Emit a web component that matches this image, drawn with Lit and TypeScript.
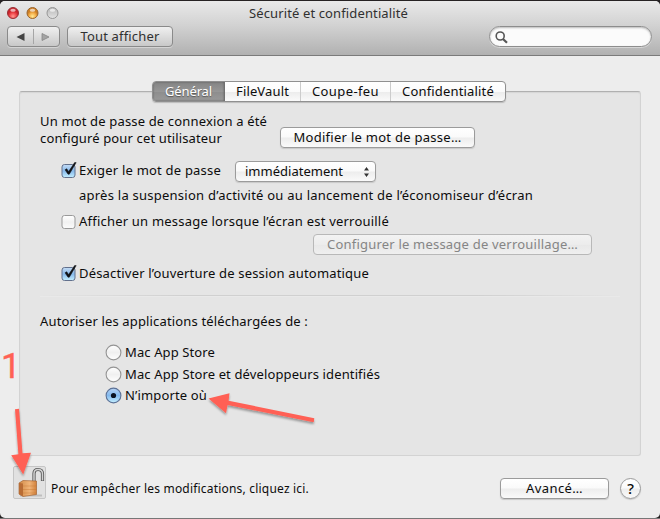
import { LitElement, html, css, svg } from "lit";
import { customElement, property } from "lit/decorators.js";

/* A single line of text, tracked so that it fills the given width. */
@customElement("tracked-text")
class TrackedText extends LitElement {
  @property() text = "";
  @property({ type: Number }) width = 0;
  static styles = css`
    :host { display: block; flex: none; white-space: pre; }
    .run { display: inline-block; font-variant-ligatures: none; }
  `;
  render() {
    return html`<span class="run">${this.text}</span>`;
  }
  updated() {
    const run = this.renderRoot.querySelector(".run") as HTMLElement;
    run.style.letterSpacing = "0px";
    const natural = run.getBoundingClientRect().width;
    const gap = (this.width - natural) / this.text.length;
    run.style.letterSpacing = gap.toFixed(3) + "px";
  }
}

const t = (text: string, width: number) =>
  html`<tracked-text .text=${text} .width=${width}></tracked-text>`;

const check = (on: boolean) => html`
  <svg class="check" width="18" height="20" viewBox="0 0 18 20">
    <defs>
      <linearGradient id="on" x1="0" y1="0" x2="0" y2="1">
        <stop offset="0" stop-color="#c5dcf4" /><stop offset=".5" stop-color="#87b9eb" /><stop offset="1" stop-color="#c4efff" />
      </linearGradient>
      <linearGradient id="off" x1="0" y1="0" x2="0" y2="1">
        <stop offset="0" stop-color="#fff" /><stop offset=".5" stop-color="#f1f1f1" /><stop offset="1" stop-color="#fbfbfb" />
      </linearGradient>
    </defs>
    <rect x="1" y="4.5" width="13" height="13" rx="2.5" fill="url(#${on ? "on" : "off"})" stroke=${on ? "#62708c" : "#999"} />
    ${on ? svg`<path d="M4 9.8 L5.7 8.7 L7.6 11.6 L13.6 2.6 L15.2 2.6 L8.3 14.2 L7 14.2 Z" fill="#101216" stroke="#101216" stroke-width=".5" />` : ""}
  </svg>`;

const radio = (on: boolean) => html`
  <svg class="radio" width="17" height="17" viewBox="0 0 17 17">
    <defs>
      <linearGradient id="ron" x1="0" y1="0" x2="0" y2="1">
        <stop offset="0" stop-color="#b8d3f3" /><stop offset=".5" stop-color="#83b9ee" /><stop offset="1" stop-color="#c6f1ff" />
      </linearGradient>
      <linearGradient id="roff" x1="0" y1="0" x2="0" y2="1">
        <stop offset="0" stop-color="#fff" /><stop offset=".5" stop-color="#f0f0f0" /><stop offset="1" stop-color="#fff" />
      </linearGradient>
    </defs>
    <circle cx="8.5" cy="8.5" r="7.4" fill="url(#${on ? "ron" : "roff"})" stroke=${on ? "#5c7196" : "#949494"} stroke-width="1.1" />
    ${on ? svg`<circle cx="8.5" cy="8.5" r="2.6" fill="#0b1220" />` : ""}
  </svg>`;

@customElement("app-root")
class AppRoot extends LitElement {
  static styles = css`
    :host { display: block; width: 660px; height: 519px; background: #262223; overflow: hidden; position: relative;
      font: 13px/17px "Noto Sans", "Open Sans", sans-serif; color: #0c0c0c; }
    * { box-sizing: border-box; }
    svg { display: block; flex: none; }
    .window { margin-top: 1px; height: 517px; background: #ededed; border-radius: 5px; overflow: hidden;
      display: flex; flex-direction: column; }
    .under { height: 1px; background: #777; }
    header { flex: none; height: 55px; background: linear-gradient(#e9e9e9, #d2d2d2 45%, #b1b1b1);
      border-bottom: 1px solid #7b7b7b; color: #303030; }
    .title { display: grid; grid-template-columns: 249px auto; height: 25px; align-items: center; padding-bottom: 1px; }
    .lights { padding-left: 6px; }
    .tools { display: flex; align-items: center; height: 21px; padding: 0 8px 0 7px; }
    .tool { height: 21px; border: 1px solid #8a8a8a; border-radius: 4px; background: linear-gradient(#f0f0f0, #c8c8c8);
      box-shadow: 0 1px 0 #d3d3d3; display: flex; align-items: center; justify-content: center; }
    .nav { width: 53px; margin-right: 7px; }
    .all { width: 106px; }
    .search { margin-left: auto; width: 163px; height: 21px; border: 1px solid #8d8d8d; border-radius: 11px; background: #fbfbfb;
      box-shadow: inset 0 1px 2px #bbb, 0 1px 0 #d5d5d5; padding: 4px 0 0 5px; }
    .stage { flex: none; padding: 25px 19px 0; height: 400px; }
    .tabs { height: 21px; width: 354px; margin-left: 133px; display: grid; grid-template-columns: 72px 75px 90px 115px;
      border: 1px solid #909090; border-radius: 4px; background: linear-gradient(#fff, #fbfbfb 50%, #ececec 52%, #fafafa);
      overflow: hidden; position: relative; box-shadow: 0 1px 1px #bbb; }
    .tab { display: flex; align-items: center; justify-content: center; }
    .tab + .tab + .tab { border-left: 1px solid #ccc; background-clip: padding-box; }
    .active { background: linear-gradient(#848484, #969696 50%, #8d8d8d 52%, #999); color: #fff; text-shadow: 0 1px 1px #555; border-right: 1px solid #707070; box-shadow: inset 0 0 2px #555; }
    .panel { margin-top: -11px; height: 365px; background: #e5e5e5; border: 1px solid #d3d3d3; border-top-color: #b0b0b0;
      border-radius: 3px; box-shadow: inset 0 1px 1px #d5d5d5; padding: 20px 20px 0; }
    .row { display: flex; align-items: center; }
    .button { height: 21px; border: 1px solid #9b9b9b; border-radius: 4px; display: flex; align-items: center; justify-content: center;
      background: linear-gradient(#fff, #fafafa 48%, #ededed 52%, #fafafa); box-shadow: 0 1px 1px #c8c8c8; }
    .login { height: 36px; }
    .login .button { width: 195px; margin: 15px 0 0 13px; }
    .opt { height: 22px; padding-left: 21px; }
    .require { margin-top: 11px; }
    .popup { width: 141px; margin: 3px 0 0 14px; justify-content: space-between; padding: 0 5px 0 9px; }
    .after { padding-left: 39px; margin-top: 5px; height: 18px; }
    .message { margin-top: 6px; }
    .lockmsg { width: 279px; margin: 2px 0 0 273px; color: #858585; background: linear-gradient(#f3f3f3, #ececec 50%, #e8e8e8 52%, #efefef); border-color: #b8b8b8; box-shadow: none; }
    .auto { margin-top: 7px; }
    .rule { height: 2px; margin: 11px 0 16px; background: linear-gradient(90deg, transparent, #d0d0d0 25%, #d0d0d0 75%, transparent); border-bottom: 1px solid #e9e9e9; }
    .choices { padding: 12px 0 0 65px; }
    .choice { height: 21.5px; }
    .radio { margin-right: 3px; }
    footer { display: flex; align-items: flex-start; padding: 0 19px 0 13px; height: 34px; margin-top: 10px; }
    .lock { margin: 0 5px 0 0; }
    .hint { font-size: 12px; padding-top: 14px; }
    .advanced { width: 109px; margin: 12px 11px 0 auto; }
    .help { width: 21px; border-radius: 50%; margin-top: 12px; font-size: 15px; font-weight: 500; }
    .notes { position: absolute; left: 0; top: 0; }
    .num { font: 400 35px Roboto, sans-serif; fill: #ff6155; stroke: #ff6155; stroke-width: .4px; }
  `;
  render() {
    return html`
      <div class="window">
        <header>
          <div class="title">
            <svg class="lights" width="70" height="14" viewBox="0 0 64 14">
              <defs>
                <radialGradient id="r" cy=".8"><stop offset="0" stop-color="#ff9a92" /><stop offset=".6" stop-color="#f0484b" /><stop offset="1" stop-color="#c9242c" /></radialGradient>
                <radialGradient id="y" cy=".8"><stop offset="0" stop-color="#ffe995" /><stop offset=".6" stop-color="#f6b04a" /><stop offset="1" stop-color="#cd7f25" /></radialGradient>
                <linearGradient id="g" x1="0" y1="0" x2="0" y2="1"><stop offset="0" stop-color="#b5b5b5" /><stop offset="1" stop-color="#e4e4e4" /></linearGradient>
              </defs>
              <g stroke-width="1">
                <circle cx="7" cy="7" r="5.5" fill="url(#r)" stroke="#973035" />
                <circle cx="26.5" cy="7" r="5.5" fill="url(#y)" stroke="#99662f" />
                <circle cx="46.5" cy="7" r="5.5" fill="url(#g)" stroke="#969696" />
              </g>
              <g fill="#fff" opacity=".65"><ellipse cx="7" cy="4.2" rx="2.7" ry="1.5" /><ellipse cx="26.5" cy="4.2" rx="2.7" ry="1.5" /><ellipse cx="46.5" cy="4.2" rx="2.7" ry="1.5" /></g>
            </svg>
            ${t("Sécurité et confidentialité", 159)}
          </div>
          <div class="tools">
            <div class="tool nav">
              <svg width="51" height="19" viewBox="0 0 51 19">
                <path d="M8.5 10 L16.5 6 V14 Z" fill="#444" />
                <path d="M25.5 2 V17" stroke="#a6a6a6" />
                <path d="M34 6.5 L41 10 L34 13.5 Z" fill="#a4a4a4" stroke="#858585" stroke-width=".8" />
              </svg>
            </div>
            <div class="tool all">${t("Tout afficher", 79)}</div>
            <div class="search">
              <svg width="14" height="14" viewBox="0 0 14 14"><circle cx="5.2" cy="5" r="4" fill="none" stroke="#555" stroke-width="1.6" /><path d="M8 8 L12 11.8" stroke="#555" stroke-width="2.2" /></svg>
            </div>
          </div>
        </header>
        <div class="stage">
          <div class="tabs">
            <div class="tab active">${t("Général", 47)}</div>
            <div class="tab">${t("FileVault", 53)}</div>
            <div class="tab">${t("Coupe-feu", 67)}</div>
            <div class="tab">${t("Confidentialité", 92)}</div>
          </div>
          <div class="panel">
            <div class="row login">
              <div>${t("Un mot de passe de connexion a été", 227)}${t("configuré pour cet utilisateur", 182)}</div>
              <div class="button modify">${t("Modifier le mot de passe…", 168)}</div>
            </div>
            <div class="row opt require">
              ${check(true)}${t("Exiger le mot de passe", 142)}
              <div class="button popup">
                ${t("immédiatement", 98)}
                <svg width="7" height="12" viewBox="0 0 7 12"><path d="M1 4.6 L3.5 1 L6 4.6 Z M1 7.4 L3.5 11 L6 7.4 Z" fill="#333" /></svg>
              </div>
            </div>
            <div class="row after">${t("après la suspension d’activité ou au lancement de l’économiseur d’écran", 454)}</div>
            <div class="row opt message">${check(false)}${t("Afficher un message lorsque l’écran est verrouillé", 310)}</div>
            <div class="button lockmsg">${t("Configurer le message de verrouillage…", 251)}</div>
            <div class="row opt auto">${check(true)}${t("Désactiver l’ouverture de session automatique", 290)}</div>
            <div class="rule"></div>
            ${t("Autoriser les applications téléchargées de :", 268)}
            <div class="choices">
              <div class="row choice">${radio(false)}${t("Mac App Store", 90)}</div>
              <div class="row choice">${radio(false)}${t("Mac App Store et développeurs identifiés", 255)}</div>
              <div class="row choice">${radio(true)}${t("N’importe où", 82)}</div>
            </div>
          </div>
        </div>
        <footer>
          <svg class="lock" width="33" height="33" viewBox="0 0 33 33">
            <defs><linearGradient id="gold" x1="0" y1="0" x2="1" y2="0"><stop offset="0" stop-color="#d18b48" /><stop offset=".6" stop-color="#f0b478" /><stop offset="1" stop-color="#d1813c" /></linearGradient></defs>
            <rect x=".5" y=".5" width="32" height="32" rx="1.5" fill="#e1e1e1" stroke="#c5c5c5" />
            <path d="M7 29.5 H29" stroke="#bebebe" stroke-width="2" />
            <path d="M21 16 V7.5 Q21 3.5 25 3.5 Q29.5 3.5 29.5 8 V15" fill="none" stroke="#555" stroke-width="3.2" />
            <path d="M21 16 V7.5 Q21 3.5 25 3.5 Q29.5 3.5 29.5 8 V14.5" fill="none" stroke="#d2d2d2" stroke-width="1.5" />
            <path d="M6 17 L10 14.5 L23.5 15 V28.5 L10 30.5 L6 28 Z" fill="url(#gold)" stroke="#9c5926" stroke-width=".6" />
            <path d="M6 17 L10 17.5 V30.3 L6 28 Z" fill="#b96d35" />
            <path d="M10 20 H23.5 M10 23.5 H23.5 M10 27 H23.5" stroke="#c5752e" stroke-width=".8" opacity=".5" />
          </svg>
          <div class="hint">${t("Pour empêcher les modifications, cliquez ici.", 258)}</div>
          <div class="button advanced">${t("Avancé…", 57)}</div>
          <div class="button help">?</div>
        </footer>
      </div>
      <div class="under"></div>
      <svg class="notes" width="660" height="519" viewBox="0 0 660 519">
        <defs><filter id="sh" x="-20%" y="-20%" width="140%" height="150%"><feDropShadow dx="0" dy="2" stdDeviation="1.3" flood-opacity=".35" /></filter></defs>
        <text class="num" x="1" y="378">1</text>
        <g fill="#ff6155" filter="url(#sh)">
          <path d="M15 409.2 L19 408.8 L22.5 453.2 L31 452.8 L23.2 474.5 L11.2 455.2 L18.4 454.2 Z" />
          <path d="M208.5 398.6 L229.5 393.2 L228.6 400.7 L314.3 418.3 L313.7 422.3 L227.6 405 L226 413.3 Z" />
        </g>
      </svg>
    `;
  }
}
